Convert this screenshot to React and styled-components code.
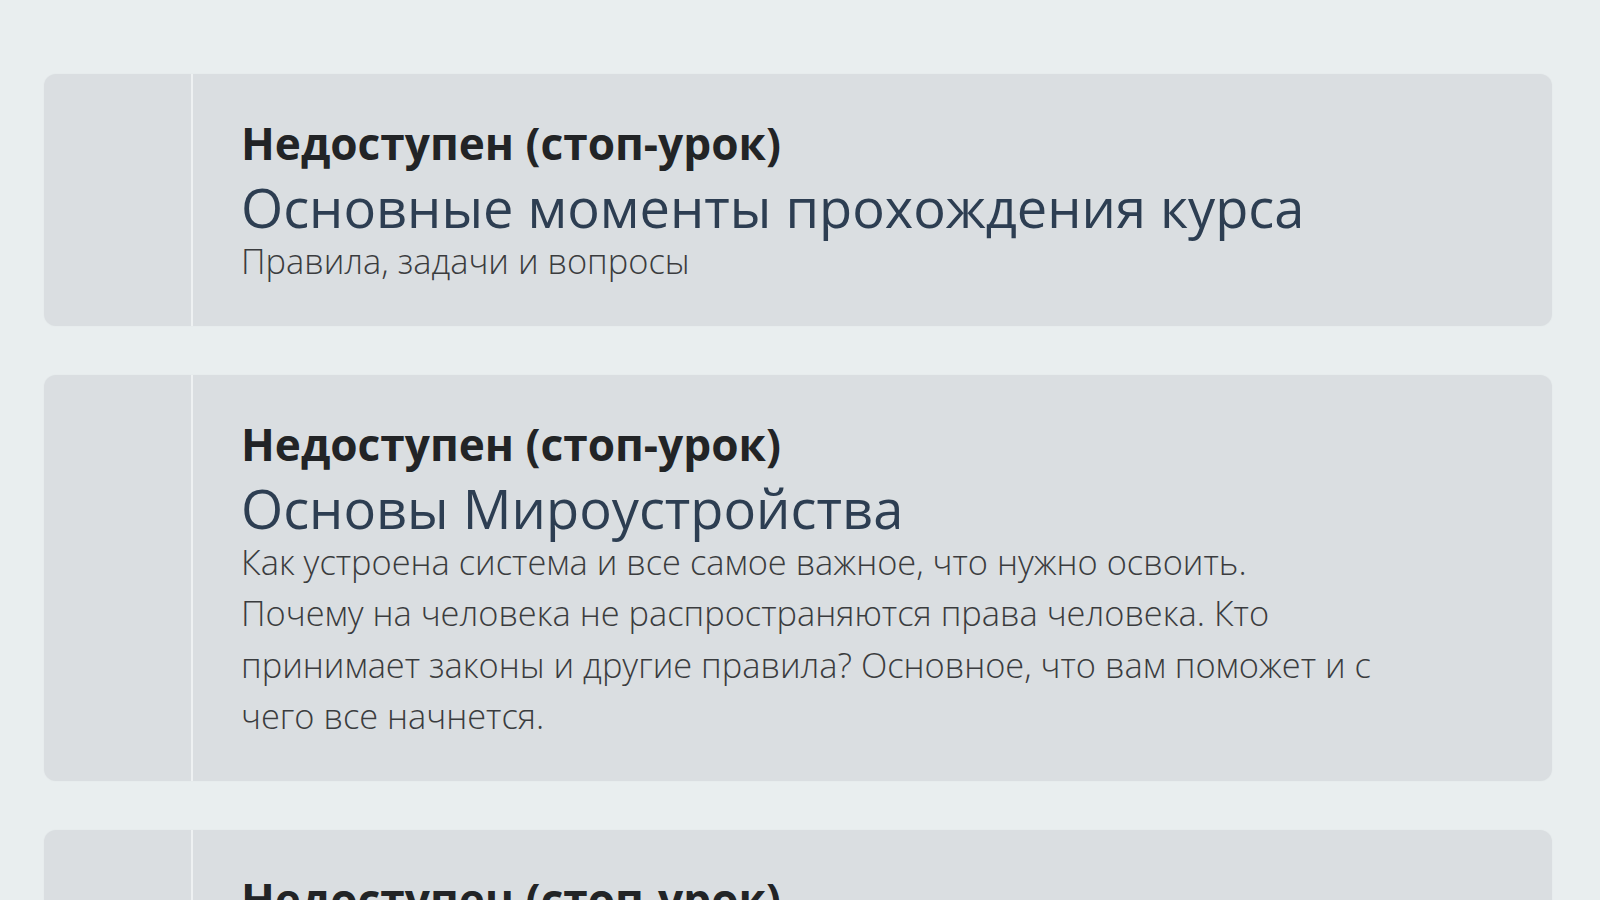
import React from 'react';
import styled, { createGlobalStyle } from 'styled-components';

const GlobalStyle = createGlobalStyle`
  html, body {
    margin: 0;
    padding: 0;
    background: #e9eeef;
    font-family: 'Open Sans', 'Noto Sans', sans-serif;
  }
`;

const LessonList = styled.div`
  display: flex;
  flex-direction: column;
  gap: 49px;
  padding: 74px 48px 0 44px;
`;

const LessonCard = styled.div`
  display: flex;
  flex-direction: row;
  background: #dadee1;
  border-radius: 12px;
  box-shadow: 0 0 2px rgba(0, 0, 0, 0.04);
  overflow: hidden;
`;

const LessonMarker = styled.div`
  flex: 0 0 147px;
  border-right: 2px solid #eef1f2;
`;

const LessonBody = styled.div`
  display: flex;
  flex-direction: column;
  padding: 43px 48px 39px 48px;
`;

const LessonStatus = styled.div`
  color: #222426;
  font-size: 44.2px;
  line-height: 52px;
  font-weight: 700;
`;

const LessonTitle = styled.h2`
  margin: 10px 0 0;
  color: #2d3e52;
  font-size: 54.2px;
  line-height: 56px;
  font-weight: 400;
`;

const LessonText = styled.div`
  max-width: 1160px;
  color: #3a3c3e;
  font-size: 34.4px;
  line-height: 51.5px;
  font-weight: 300;

  p {
    margin: 0;
  }
`;

const lessons = [
  {
    title: 'Основные моменты прохождения курса',
    text: ['Правила, задачи и вопросы'],
  },
  {
    title: 'Основы Мироустройства',
    text: [
      'Как устроена система и все самое важное, что нужно освоить.',
      'Почему на человека не распространяются права человека. Кто принимает законы и другие правила? Основное, что вам поможет и с чего все начнется.',
    ],
  },
  {
    title: 'Первые шаги',
    text: ['С чего начать и как не потеряться'],
  },
];

const App = () => {
  return (
    <>
      <GlobalStyle />
      <LessonList>
        {lessons.map((lesson) => (
          <LessonCard key={lesson.title}>
            <LessonMarker />
            <LessonBody>
              <LessonStatus>Недоступен (стоп-урок)</LessonStatus>
              <LessonTitle>{lesson.title}</LessonTitle>
              <LessonText>
                {lesson.text.map((line) => (
                  <p key={line}>{line}</p>
                ))}
              </LessonText>
            </LessonBody>
          </LessonCard>
        ))}
      </LessonList>
    </>
  );
};

export default App;
